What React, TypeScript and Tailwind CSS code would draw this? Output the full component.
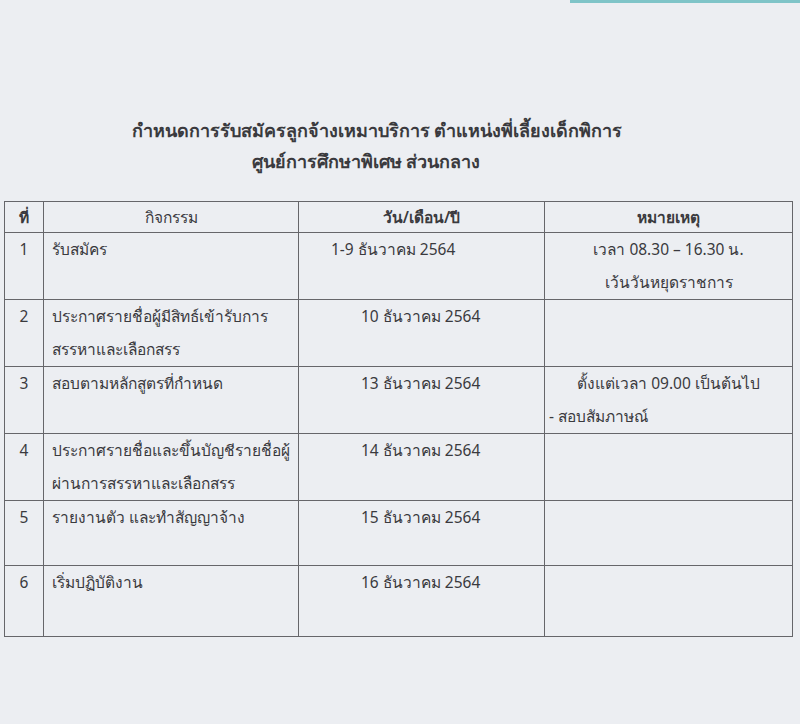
import React from 'react';

const rows = [
  { no: '1', act: ['รับสมัคร'], date: '1-9 ธันวาคม 2564', datePad: 'pl-[32px]', note: ['เวลา 08.30 – 16.30 น.', 'เว้นวันหยุดราชการ'], noteLeft: false },
  { no: '2', act: ['ประกาศรายชื่อผู้มีสิทธ์เข้ารับการ', 'สรรหาและเลือกสรร'], date: '10 ธันวาคม 2564', datePad: 'pl-[62px]', note: [], noteLeft: false },
  { no: '3', act: ['สอบตามหลักสูตรที่กำหนด'], date: '13 ธันวาคม 2564', datePad: 'pl-[62px]', note: ['ตั้งแต่เวลา 09.00 เป็นต้นไป', '- สอบสัมภาษณ์'], noteLeft: true },
  { no: '4', act: ['ประกาศรายชื่อและขึ้นบัญชีรายชื่อผู้', 'ผ่านการสรรหาและเลือกสรร'], date: '14 ธันวาคม 2564', datePad: 'pl-[62px]', note: [], noteLeft: false },
  { no: '5', act: ['รายงานตัว และทำสัญญาจ้าง'], date: '15 ธันวาคม 2564', datePad: 'pl-[62px]', note: [], noteLeft: false },
  { no: '6', act: ['เริ่มปฏิบัติงาน'], date: '16 ธันวาคม 2564', datePad: 'pl-[62px]', note: [], noteLeft: false },
];

export default function App() {
  return (
    <div
      className="relative w-[800px] h-[724px] overflow-hidden bg-[#eceef2] text-[#3a3a3e]"
      style={{ fontFamily: '"Noto Sans", "Open Sans", sans-serif' }}
    >
      {/* scanner edge strip */}
      <div className="absolute top-0 right-0 w-[230px] h-[3px] bg-[#7fc4c8]" />

      <div className="pt-[115px] flex flex-col items-center pr-[46px]">
        <p className="text-[18px] leading-[31px] font-semibold">
          กำหนดการรับสมัครลูกจ้างเหมาบริการ ตำแหน่งพี่เลี้ยงเด็กพิการ
        </p>
        <p className="text-[18px] leading-[31px] font-semibold pr-[22px]">ศูนย์การศึกษาพิเศษ ส่วนกลาง</p>
      </div>

      <table className="ml-[4px] mt-[24px] border-collapse text-[15.5px] leading-[33px] table-fixed w-[788px]">
        <colgroup>
          <col className="w-[39px]" />
          <col className="w-[255px]" />
          <col className="w-[246px]" />
          <col className="w-[248px]" />
        </colgroup>
        <thead>
          <tr className="h-[31px]">
            <th className="border border-[#66666a] font-semibold text-center leading-[29px]">ที่</th>
            <th className="border border-[#66666a] font-normal text-center leading-[29px]">กิจกรรม</th>
            <th className="border border-[#66666a] font-semibold text-center leading-[29px]">วัน/เดือน/ปี</th>
            <th className="border border-[#66666a] font-semibold text-center leading-[29px]">หมายเหตุ</th>
          </tr>
        </thead>
        <tbody>
          {rows.map((r, i) => (
            <tr key={r.no} className={i === 5 ? 'h-[71px]' : 'h-[65px]'}>
              <td className="border border-[#66666a] align-top text-center">{r.no}</td>
              <td className="border border-[#66666a] align-top pl-[8px]">
                {r.act.map((t) => (
                  <div key={t} className="whitespace-nowrap">{t}</div>
                ))}
              </td>
              <td className={`border border-[#66666a] align-top ${r.datePad}`}>{r.date}</td>
              <td className="border border-[#66666a] align-top">
                {r.note.map((t, j) => (
                  <div
                    key={t}
                    className={r.noteLeft && j === 1 ? 'pl-[4px] whitespace-nowrap' : 'text-center whitespace-nowrap'}
                  >
                    {t}
                  </div>
                ))}
              </td>
            </tr>
          ))}
        </tbody>
      </table>
    </div>
  );
}
